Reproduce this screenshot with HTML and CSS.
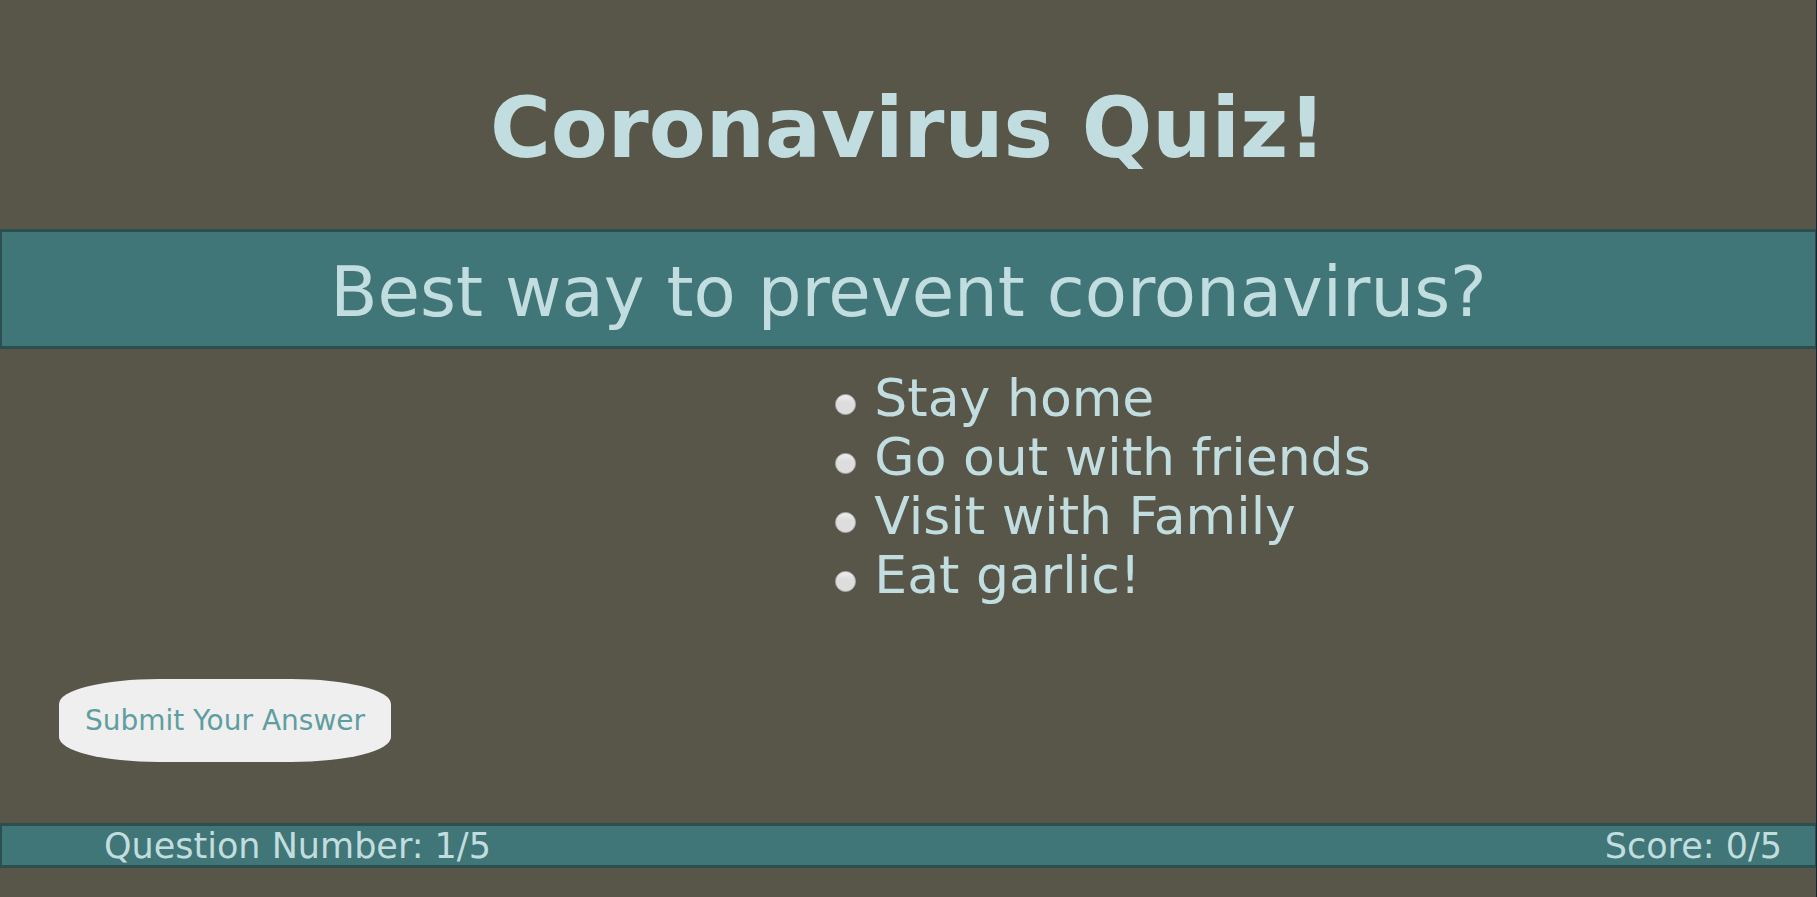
FILE: index.html
```html
<!DOCTYPE html>
<html lang="en">
<head>
<meta charset="utf-8">
<title>Coronavirus Quiz!</title>
<link rel="stylesheet" href="styles.css">
</head>
<body class="page">
<header class="header"><h1 class="title">Coronavirus Quiz!</h1></header>
<main class="main">
<form class="quiz">
<h2 class="question" id="question">Best way to prevent coronavirus?</h2>
<div class="options" role="radiogroup" aria-labelledby="question">
<div class="option"><input class="radio" type="radio" name="answer" id="a1"><label for="a1">Stay home</label></div>
<div class="option"><input class="radio" type="radio" name="answer" id="a2"><label for="a2">Go out with friends</label></div>
<div class="option"><input class="radio" type="radio" name="answer" id="a3"><label for="a3">Visit with Family</label></div>
<div class="option"><input class="radio" type="radio" name="answer" id="a4"><label for="a4">Eat garlic!</label></div>
</div>
<button class="submit" type="button">Submit Your Answer</button>
</form>
</main>
<footer class="status"><span>Question Number: 1/5</span><span>Score: 0/5</span></footer>
</body>
</html>
```
FILE: styles.css
```css
* { box-sizing: border-box; }
.page {
  margin: 0;
  min-height: 100vh;
  background: #585549;
  color: #c2dddf;
  font-family: Verdana, "DejaVu Sans", sans-serif;
  border-right: 1px solid #172530;
}
.header { padding: 81px 0 52px; }
.title {
  margin: 0;
  font-size: 83px;
  line-height: 96px;
  text-align: center;
}
.question {
  margin: 0;
  padding: 19px 0 13px;
  border: 3px solid #2b4e4f;
  border-width: 3px 1px 3px 2px;
  background: #407677;
  font-size: 69px;
  font-weight: 400;
  line-height: 82px;
  text-align: center;
}
.options { padding: 20px 0 0 46%; }
.option {
  display: flex;
  align-items: center;
  gap: 18px;
  font-size: 52px;
  line-height: 59px;
}
.radio {
  appearance: none;
  flex: none;
  width: 21px;
  height: 21px;
  margin: 12px 0 0;
  border: 1px solid #b4b4b2;
  border-radius: 50%;
  background: linear-gradient(#eee, #ddd 40%, #ddd);
}
.radio:checked { background: radial-gradient(#407677 40%, #ddd 45%); }
.submit {
  display: block;
  margin: 74px 0 61px 59px;
  padding: 24px 26px;
  border: 0;
  border-radius: 30%;
  background: #efefef;
  color: #5f9ea0;
  font-family: inherit;
  font-size: 28px;
  line-height: 35px;
}
.status {
  display: flex;
  justify-content: space-between;
  padding: 2px 33px 0 102px;
  border: 3px solid #2b4e4f;
  border-width: 3px 1px 3px 2px;
  background: #407677;
  font-size: 35px;
  line-height: 37px;
}
```
